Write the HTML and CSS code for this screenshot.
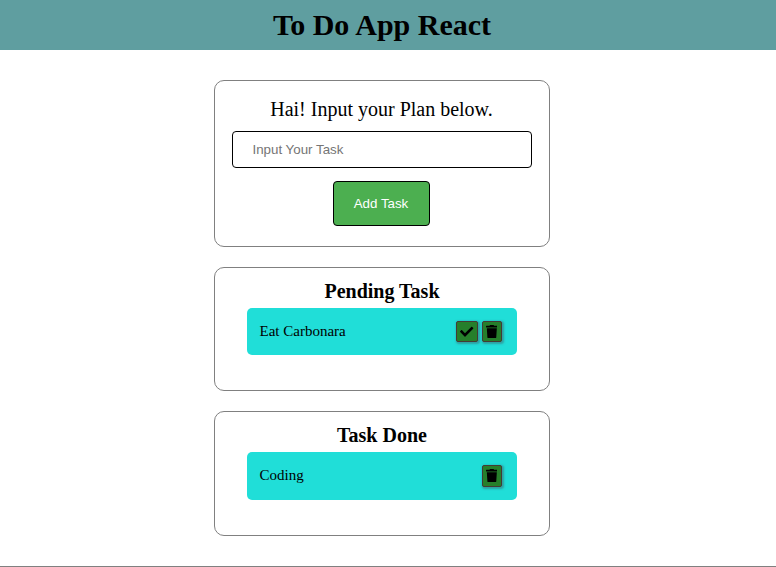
FILE: index.html
```
<!DOCTYPE html>
<html lang="en">
<head>
<meta charset="utf-8">
<title>To Do App React</title>
<link rel="stylesheet" href="styles.css">
</head>
<body>
<header class="header"><h1>To Do App React</h1></header>
<main class="content">
  <form class="card form">
    <p class="prompt">Hai! Input your Plan below.</p>
    <input class="field" type="text" placeholder="Input Your Task">
    <button class="add" type="button">Add Task</button>
  </form>
  <section class="card pending">
    <h2>Pending Task</h2>
    <div class="task">
      <span>Eat Carbonara</span>
      <div class="actions">
        <button class="icon check" type="button" aria-label="Done"><svg width="13.33" height="13.33" viewBox="0 0 512 512"><path d="M173.9 439.4 7.5 273c-10-10-10-26.200 0-36.200l36.200-36.200c10-10 26.200-10 36.200 0L192 312.700 432.100 72.600c10-10 26.200-10 36.200 0l36.200 36.200c10 10 10 26.200 0 36.200L210.100 439.400c-10 10-26.200 10-36.200 0z"/></svg></button>
        <button class="icon trash" type="button" aria-label="Delete"><svg width="11.67" height="13.33" viewBox="0 0 448 512"><path d="M432 32H312l-9.400-18.700A24 24 0 0 0 281.100 0H166.800a23.700 23.700 0 0 0-21.400 13.300L136 32H16A16 16 0 0 0 0 48v32a16 16 0 0 0 16 16h416a16 16 0 0 0 16-16V48a16 16 0 0 0-16-16zM32 128l21.200 339a48 48 0 0 0 47.900 45h245.800a48 48 0 0 0 47.900-45L416 128z"/></svg></button>
      </div>
    </div>
  </section>
  <section class="card done">
    <h2>Task Done</h2>
    <div class="task">
      <span>Coding</span>
      <div class="actions">
        <button class="icon trash" type="button" aria-label="Delete"><svg width="11.67" height="13.33" viewBox="0 0 448 512"><path d="M432 32H312l-9.400-18.700A24 24 0 0 0 281.100 0H166.800a23.700 23.700 0 0 0-21.400 13.300L136 32H16A16 16 0 0 0 0 48v32a16 16 0 0 0 16 16h416a16 16 0 0 0 16-16V48a16 16 0 0 0-16-16zM32 128l21.200 339a48 48 0 0 0 47.900 45h245.800a48 48 0 0 0 47.900-45L416 128z"/></svg></button>
      </div>
    </div>
  </section>
</main>
<footer class="footer"></footer>
</body>
</html>
```
FILE: styles.css
```
* { box-sizing: border-box; margin: 0; }
body { font-family: "Liberation Serif", "Times New Roman", serif; color: #000; background: #fff; }
.header { height: 50px; padding-right: 12px; background: #5f9ea0; text-align: center; }
h1 { font-size: 30px; line-height: 50px; }
.content { display: flex; flex-direction: column; align-items: center; gap: 20px; height: 516px; padding: 30px 12px 0 0; }
.card { display: flex; flex-direction: column; align-items: center; width: 336px; border: 1px solid gray; border-radius: 10px; }
.form { height: 167px; padding-top: 17px; }
.pending { height: 124px; padding-top: 12px; }
.done { height: 125px; padding-top: 12px; }
.prompt { margin-right: 1px; font-size: 20px; line-height: 23px; }
.field { width: 300px; height: 37px; margin-top: 10px; padding: 0 20px 0 19.500px; border: 1px solid #000; border-radius: 4px; font: 13.333px "Liberation Sans", Arial, sans-serif; }
.field::placeholder { color: #757575; }
.add { width: 97px; height: 45px; margin: 13px 2px 0 0; padding: 0; border: 1px solid #000; border-radius: 4px; background: #4caf50; color: #fff; font: 13.333px "Liberation Sans", Arial, sans-serif; }
h2 { font-size: 20px; line-height: 23px; margin-bottom: 5px; }
.task { display: flex; align-items: center; justify-content: space-between; width: 270px; height: 47px; padding: 0 15px 0 12.500px; border-radius: 5px; background: #20ded8; font-size: 15px; }
.done .task { height: 48px; }
.done span { padding-bottom: 1px; }
.actions { display: flex; gap: 4px; }
.icon { display: flex; align-items: flex-start; justify-content: center; height: 21px; padding: 2.500px 0 0; border: 1px solid #443b34; border-radius: 2px; background: #267f2b; box-shadow: 1px 1px 2px 1px rgba(60, 100, 110, .5); }
.check { width: 22px; }
.trash { width: 20px; padding-right: 1px; }
.done .icon { height: 22px; }
.footer { height: 1px; background: gray; }
```
